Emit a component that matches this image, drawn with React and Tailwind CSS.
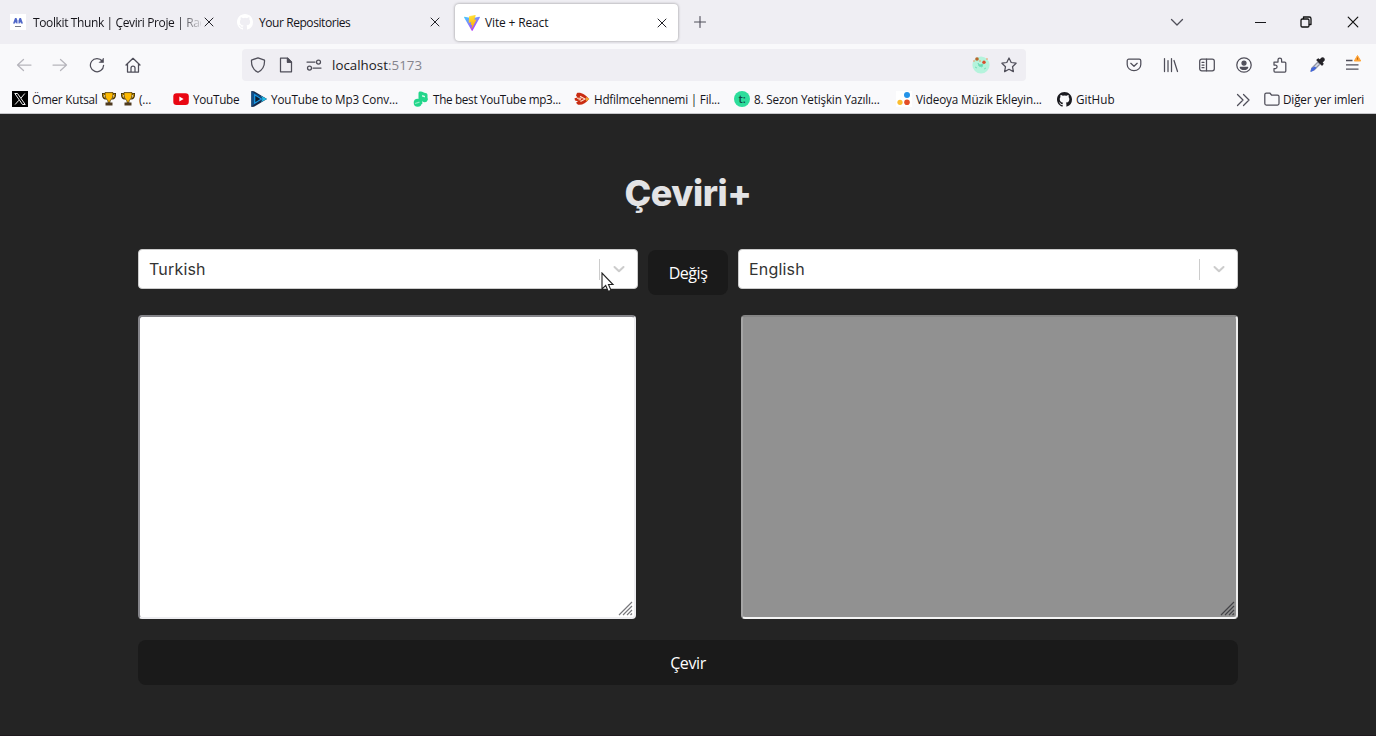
import React from "react";

const UI = "font-['Open_Sans','Noto_Sans',sans-serif]";

function Stroke({ children, size = 16, color = "#4f4e59", w = 1.25, box = 16 }) {
  return (
    <svg className="shrink-0" width={size} height={size} viewBox={`0 0 ${box} ${box}`} fill="none" stroke={color} strokeWidth={w} strokeLinecap="round" strokeLinejoin="round">
      {children}
    </svg>
  );
}

function Close({ color = "#222228", size = 10 }) {
  return (
    <Stroke size={size} box={10} color={color} w={1}>
      <path d="M1 1l8 8M9 1L1 9" />
    </Stroke>
  );
}

function GithubMark({ fill, size = 16 }) {
  return (
    <svg className="shrink-0" width={size} height={size} viewBox="0 0 16 16" fill={fill}>
      <path d="M8 0C3.58 0 0 3.58 0 8c0 3.54 2.29 6.53 5.47 7.59.4.07.55-.17.55-.38v-1.49c-2.01.37-2.53-.49-2.69-.94-.09-.23-.48-.94-.82-1.13-.28-.15-.68-.52-.01-.53.63-.01 1.08.58 1.23.82.72 1.21 1.87.87 2.33.66.07-.52.28-.87.51-1.07-1.78-.2-3.64-.89-3.64-3.95 0-.87.31-1.59.82-2.15-.08-.2-.36-1.02.08-2.12 0 0 .67-.21 2.2.82a7.6 7.6 0 0 1 4 0c1.53-1.04 2.2-.82 2.2-.82.44 1.1.16 1.92.08 2.12.51.56.82 1.27.82 2.15 0 3.07-1.87 3.75-3.65 3.95.29.25.54.73.54 1.48v2.2c0 .21.15.46.55.38A8.01 8.01 0 0 0 16 8c0-4.42-3.58-8-8-8z" />
    </svg>
  );
}

function ViteLogo() {
  return (
    <svg className="shrink-0" width="16" height="16" viewBox="0 0 32 32">
      <defs>
        <linearGradient id="va" x1="0" y1="0" x2=".6" y2="1">
          <stop offset="0" stopColor="#41d1ff" />
          <stop offset="1" stopColor="#bd34fe" />
        </linearGradient>
        <linearGradient id="vb" x1=".4" y1="0" x2=".6" y2="1">
          <stop offset="0" stopColor="#ffea83" />
          <stop offset=".1" stopColor="#ffdd35" />
          <stop offset="1" stopColor="#ffa800" />
        </linearGradient>
      </defs>
      <path d="M31.8 5L17 31.4c-.3.6-1.100.6-1.400 0L.2 5C-.2 4.300.4 3.500 1.200 3.700L16 6.300l14.600-2.600c.9-.2 1.600.700 1.200 1.300z" fill="url(#va)" />
      <path d="M22.900 0L10.500 2.200c-.2 0-.3.2-.3.4L9.500 15c0 .3.200.5.500.4l4-.7c.3-.1.500.2.500.500l-1 4.500c0 .3.200.6.500.5l1.900-.6c.3-.1.600.2.500.5l-1.400 7c-.1.400.5.700.7.300l.2-.3 8.900-17.700c.1-.3-.1-.6-.5-.6l-3.100.6c-.3.1-.5-.2-.4-.5l2.500-8c.1-.3-.1-.6-.4-.5z" fill="url(#vb)" />
    </svg>
  );
}

function Trophy() {
  return (
    <svg className="shrink-0" width="14" height="14" viewBox="0 0 14 14">
      <path d="M3 2H.8c0 3 1 4.500 3 4.800M11 2h2.200c0 3-1 4.500-3 4.800" fill="none" stroke="#3a2b08" strokeWidth="1.900" />
      <path d="M3 2.200H1.200c0 2.300.8 3.500 2.500 4M11 2.200h1.800c0 2.300-.8 3.500-2.500 4" fill="none" stroke="#f5b400" strokeWidth=".8" />
      <path d="M3 .6h8c.2 4-.8 7-3 8v2H6v-2C3.800 7.600 2.800 4.600 3 .6z" fill="#fdb900" stroke="#4a370c" strokeWidth=".8" />
      <path d="M3.500 10.500h7v3h-7z" fill="#4e3a20" />
    </svg>
  );
}

function XLogo() {
  return (
    <svg className="shrink-0" width="16" height="16" viewBox="0 0 16 16">
      <path d="M0 0h16v16H0z" fill="#000" />
      <path d="M2.800 2.500h2.700l7.700 11h-2.700zM12.800 2.500L9 7M7 9.200l-3.900 4.300" fill="none" stroke="#f2f2f2" strokeWidth="1" />
    </svg>
  );
}

function YoutubeLogo() {
  return (
    <svg className="shrink-0" width="16" height="16" viewBox="0 0 16 16">
      <rect x=".3" y="2.200" width="15.500" height="11.800" rx="3.300" fill="#e90612" />
      <path d="M6.300 5.600v5l4.300-2.500z" fill="#fff" />
    </svg>
  );
}

function PlayLogo() {
  return (
    <svg className="shrink-0" width="16" height="16" viewBox="0 0 16 16">
      <path d="M.3 0L3 .3 16 8 3 15.700.3 16z" fill="#16294a" />
      <path d="M.5.500L15 7.500 4 4v9L.5 15.500z" fill="#12508a" />
      <path d="M3.700 3.800v8.400L10.500 8z" fill="#101d30" stroke="#1a9dea" strokeWidth="1.200" />
      <path d="M10 5L16 8l-6 3 1.500-3z" fill="#20bce8" />
    </svg>
  );
}

function NoteLogo() {
  return (
    <svg className="shrink-0" width="16" height="16" viewBox="0 0 16 16" fill="#22d68b">
      <path d="M5.500 2C5.500.8 6.500.2 7.800.5c2 .4 3 1.300 4.700 1.400 1.200.1 2 .8 2 2V9H9.300v4H5.500z" />
      <circle cx="4.700" cy="11.800" r="4" />
      <circle cx="11.700" cy="8.300" r="2.900" />
      <path d="M9 4.300c1.500 0 2 .7 3 .7v1.300c-1 0-1.700-.3-3-.7z" fill="#d9fbec" />
      <path d="M2 12.500l4.500-1.300" stroke="#91edc4" strokeWidth="1.200" />
    </svg>
  );
}

function FilmLogo() {
  return (
    <svg className="shrink-0" width="16" height="16" viewBox="0 0 16 16">
      <path d="M3 2c4-1 9 2 12 6-3 4-7 6.500-11 5.700L2 11.800l2-1.500-3-.8L.5 7.300l3-.8L2 4.500z" fill="#c92c12" />
      <path d="M6 5.200L11 8l-4.500 2.500M3 7.300h4.500M7 8.800H4.500" fill="none" stroke="#ffe3cc" strokeWidth="1.100" />
      <path d="M12 6L15.500 8 12 10.300" fill="#f0a52c" />
    </svg>
  );
}

function TLogo() {
  return (
    <span className="flex size-4 shrink-0 items-center justify-center rounded-full bg-[#2cdd9b] pb-0.5 text-[11px] leading-none font-semibold text-[#0c4a48]">t:</span>
  );
}

function DotsLogo() {
  return (
    <svg className="shrink-0" width="16" height="16" viewBox="0 0 16 16">
      <path d="M0 0h16v16H0z" fill="#fff" />
      <circle cx="11" cy="4" r="3" fill="#2493e8" />
      <circle cx="4" cy="11.300" r="2.600" fill="#fbbd2e" />
      <circle cx="11" cy="11.300" r="2.800" fill="#e34e27" />
    </svg>
  );
}

const bookmarks = [
  { icon: <YoutubeLogo />, text: "YouTube", w: "w-[78px]", t: "tracking-[-0.25px]" },
  { icon: <PlayLogo />, text: "YouTube to Mp3 Conv...", w: "w-[162px]", t: "tracking-[-0.11px]" },
  { icon: <NoteLogo />, text: "The best YouTube mp3...", w: "w-[161px]", t: "tracking-[-0.3px]" },
  { icon: <FilmLogo />, text: "Hdfilmcehennemi | Fil...", w: "w-[160px]", t: "tracking-[-0.2px]" },
  { icon: <TLogo />, text: "8. Sezon Yetişkin Yazılı...", w: "w-[162px]", t: "tracking-[-0.17px]" },
  { icon: <DotsLogo />, text: "Videoya Müzik Ekleyin...", w: "w-[161px]", t: "tracking-[-0.12px]" },
  { icon: <GithubMark fill="#1b1b20" size={15} />, text: "GitHub", w: "w-[179px]", t: "tracking-[0px]" },
];

function TabBar() {
  return (
    <div className="flex h-11 items-start bg-[#efeef3] text-[12px] text-[#15141a]">
      <div className="flex h-11 w-[227px] items-center pl-2.5">
        <svg className="shrink-0" width="16" height="16" viewBox="0 0 16 16">
          <path d="M0 0h16v16H0z" fill="#fff" />
          <path d="M3 9.500L5 4h1.500l1 2.500V9.500H6.500L5.700 8 5 9.500zM8.500 9.500V6.500L9.500 4H11l2 5.500h-2L10.300 8l-.8 1.500z" fill="#5067c8" />
          <path d="M5 12.500h6" stroke="#777a86" strokeWidth="1" />
        </svg>
        <div className="mt-0.5 ml-[7px] w-[168px] bg-linear-to-r from-[#15141a] from-86% to-[#15141a20] bg-clip-text whitespace-nowrap text-transparent tracking-[-0.38px]">Toolkit Thunk | Çeviri Proje | Rac</div>
        <span className="ml-[2.500px]"><Close /></span>
      </div>
      <div className="flex h-11 w-[228px] items-center pl-2.5">
        <GithubMark fill="#fff" />
        <div className="mt-0.5 ml-1.5 w-[171px] whitespace-nowrap tracking-[-0.43px]">Your Repositories</div>
        <Close />
      </div>
      <div className="mt-1 flex h-[37px] w-[223px] items-center rounded bg-white pl-[9px] shadow-[0_0_3px_rgba(0,0,0,0.4)]">
        <ViteLogo />
        <div className="mt-px ml-[5px] w-[172px] whitespace-nowrap tracking-[-0.15px]">Vite + React</div>
        <Close />
      </div>
      <div className="flex h-11 flex-1 items-center pl-4">
        <Stroke size={12} box={12} w={1.1}><path d="M6 .5v11M.500 6h11" /></Stroke>
        <div className="ml-[464px] flex items-center">
          <Stroke size={14} box={14} w={1.300}><path d="M1.500 4.500L7 10l5.500-5.500" /></Stroke>
        </div>
        <div className="ml-[71px] h-px w-[11px] bg-[#18181c]" />
        <div className="ml-[34px]">
          <Stroke size={12} box={12} w={1.300} color="#111"><rect x="1" y="3" width="8" height="8" rx="1.300" /><path d="M3.500 2.500V1h5.800c1 0 1.700.7 1.700 1.700V8.500H9.500" /></Stroke>
        </div>
        <div className="ml-[35px]"><Close size={12} color="#111" /></div>
      </div>
    </div>
  );
}

function Toolbar() {
  return (
    <div className="flex h-[42px] items-center pl-4">
      <div className="flex w-[226px] items-center gap-5">
        <Stroke color="#b6b5bc"><path d="M15 8H1.500M7.500 2.500L1.500 8l6 5.500" /></Stroke>
        <Stroke color="#b6b5bc"><path d="M1 8h13.500M8.500 2.500l6 5.500-6 5.500" /></Stroke>
        <span className="ml-px flex"><Stroke><path d="M13.300 4.200A6.600 6.600 0 1 0 14.600 8.300" /><path d="M14.500 1.500v4h-4z" fill="#4f4e59" strokeWidth=".6" /></Stroke></span>
        <Stroke><path d="M1 8l7-6.700L15 8M2.500 7v8h11V7M6 15v-4a2 2 0 0 1 4 0v4" /></Stroke>
      </div>
      <div className="flex h-8 w-[784px] items-center rounded bg-[#efeef3] pl-2">
        <Stroke><path d="M8 .8l6.500 2.400C14.800 8.500 13 12.800 8 15.300 3 12.800 1.200 8.500 1.500 3.200z" /></Stroke>
        <span className="ml-3 flex"><Stroke><path d="M2.500 1.200h7l4 4v9.600h-11zM9.500 1.200v4h4" /><path d="M9.500 1.200v4h4z" fill="#4f4e59" /></Stroke></span>
        <span className="ml-3 flex"><Stroke><path d="M1 5h8M7 11h8" /><circle cx="12.500" cy="5" r="2" /><circle cx="3.500" cy="11" r="2" /></Stroke></span>
        <div className="mt-0.5 ml-2.5 w-[640px] text-[13.300px] leading-none text-[#1b1a22] tracking-[0.03px]">localhost<span className="text-[#85848d]">:5173</span></div>
        <svg className="shrink-0" width="18" height="18" viewBox="0 0 18 18">
          <circle cx="9" cy="9" r="8.600" fill="#b5f3dc" />
          <path d="M6 7l2 2 3-1-1 3-3-1zM3 11l2 1M12 13l2-1" fill="#65d9b1" stroke="#75dfbb" />
          <circle cx="5" cy="3" r="1.800" fill="#b9662d" /><circle cx="12" cy="6.300" r="1.700" fill="#d84b2b" />
          <path d="M1 5h2M7 5h2M14 3h2" stroke="#f29a64" />
        </svg>
        <span className="ml-[11px] flex"><Stroke><path d="M8 1l2.200 4.500 4.900.7-3.600 3.500.9 4.900L8 12.300l-4.400 2.300.9-4.900L.9 6.200l4.900-.7z" /></Stroke></span>
      </div>
      <div className="ml-[100px] flex gap-[20.500px]">
        <Stroke><path d="M2.800 2.200h10.400c.9 0 1.600.7 1.600 1.600v3.700a6.800 6.200 0 0 1-13.600 0V3.800c0-.9.7-1.600 1.600-1.600zM4.800 6.300L8 9.300l3.200-3" /></Stroke>
        <Stroke><path d="M1.500 1.500v13M5 3.500v11M8.500 1.500v13M11 3.500l3.500 11" /></Stroke>
        <Stroke><rect x=".7" y="2.200" width="14.600" height="11.600" rx="2" /><path d="M7.500 2.200v11.600M3 5.300h2M3 8h2M3 10.700h2" /></Stroke>
        <Stroke><circle cx="8" cy="8" r="7.200" /><circle cx="8" cy="6" r="2" fill="#4f4e59" /><path d="M4.300 10.300h7.400c-1 2.900-6.400 2.900-7.400 0z" fill="#4f4e59" /></Stroke>
        <Stroke><path d="M2 5h4V2.800a1.800 1.800 0 0 1 3.600 0V5h3.200c.6 0 1 .4 1 1v8c0 .6-.4 1-1 1H3c-.6 0-1-.4-1-1v-2.500h1.700a1.800 1.800 0 0 0 0-3.500H2z" /></Stroke>
        <Stroke><path d="M2 14l1-3 6-6 2 2-6 6-3 1z" fill="#d7dce6" stroke="#8f93a3" /><path d="M1.500 15l1-4 3.500-1.500 1.500 1.500L4 14z" fill="#4065dc" stroke="none" /><path d="M8 3l5 5 1-1.200-1.300-1.300L15 3.200C15.500 1.500 14.500.7 13 1l-2.300 2.300L9.300 2z" fill="#252328" stroke="#252328" /></Stroke>
        <svg className="overflow-visible" width="16" height="16" viewBox="0 0 16 16"><path d="M1 3.500h6.500M1 7.800h12.500M1 12.200h12.500" stroke="#4f4e59" strokeWidth="1.300" /><path d="M12.500-1.500L15.700 4H9.300z" fill="#ffa436" stroke="#ffa436" strokeLinejoin="round" /><path d="M12.500.500v2.200" stroke="#c36310" /></svg>
      </div>
    </div>
  );
}

function Bookmarks() {
  return (
    <div className="flex h-[27px] items-center pl-3 text-[11.700px] text-[#15141a]">
      <div className="flex w-[161px] items-center whitespace-nowrap">
        <XLogo />
        <span className="ml-1 w-[69px] tracking-[-0.2px]">Ömer Kutsal</span>
        <span className="ml-px flex gap-[5px]"><Trophy /><Trophy /></span>
        <span className="ml-1 tracking-[-0.1px]">(...</span>
      </div>
      {bookmarks.map((b) => (
        <div key={b.text} className={`flex shrink-0 items-center gap-1 whitespace-nowrap ${b.w} ${b.t}`}>
          {b.icon}
          <span>{b.text}</span>
        </div>
      ))}
      <Stroke size={14} box={14}><path d="M1.500 1.500L7 7l-5.500 5.500M7.500 1.500L13 7l-5.500 5.500" /></Stroke>
      <span className="mb-0.5 ml-3.5 flex"><Stroke><path d="M.8 12.500v-9c0-.9.6-1.500 1.500-1.500h3.500l1.700 2h6c.9 0 1.500.6 1.500 1.500v7c0 .9-.6 1.500-1.500 1.500H2.300c-.9 0-1.500-.6-1.500-1.500z" /></Stroke></span>
      <span className="ml-[3px] whitespace-nowrap tracking-[-0.14px]">Diğer yer imleri</span>
    </div>
  );
}

function Select({ value, children }) {
  return (
    <div className="relative flex h-10 w-[500px] items-center rounded border border-[#ccc] bg-white pl-2.5 font-['Inter',sans-serif] text-[16px] text-[#333]">
      <span className="flex-1 tracking-[0.18px]">{value}</span>
      <span className="h-[21px] w-px bg-[#ccc]" />
      <span className="flex w-[37px] justify-center">
        <Stroke size={20} box={20} color="#ccc" w={2}><path d="M5.500 8l4.500 4.300L14.500 8" /></Stroke>
      </span>
      {children}
    </div>
  );
}

function Grip({ color }) {
  return (
    <svg className="absolute right-px bottom-px" width="15" height="15" viewBox="0 0 15 15" stroke={color} strokeWidth="1.200">
      <path d="M1 14L14 1M5 14l9-9M9 14l5-5M12.500 14l1.500-1.500" />
    </svg>
  );
}

export default function App() {
  return (
    <div className={`flex h-[736px] w-[1376px] flex-col overflow-hidden bg-[#242424] ${UI}`}>
      <header className="h-[114px] shrink-0 border-b border-[#c6c6ca] bg-[#f9f9fb]">
        <TabBar />
        <Toolbar />
        <Bookmarks />
      </header>
      <main className="mx-auto flex w-[1100px] flex-1 flex-col">
        <h1 className="mt-[55px] text-center font-['Inter',sans-serif] text-[36px] leading-[48px] font-extrabold tracking-[-0.45px] text-[#e3e3e5]">Çeviri+</h1>
        <div className="mt-[32px] flex h-[46px] items-start justify-between">
          <Select value="Turkish">
            <svg className="absolute top-[22px] left-[462px]" width="14" height="21" viewBox="0 0 14 21">
              <path d="M1 1v16l3.700-3.500L7.300 19.500l2.700-1.200-2.500-5.800H12z" fill="#fff" stroke="#222" strokeWidth="1.100" />
            </svg>
          </Select>
          <button className="mt-px h-[45px] w-20 rounded-lg bg-[#1a1a1a] text-[16px] tracking-[-0.45px] text-white">Değiş</button>
          <Select value="English" />
        </div>
        <div className="mt-5 flex h-[304px] justify-between">
          <div className="relative w-[498px] rounded border-2 border-t-[#85858a] border-r-[#ededf0] border-b-[#ededf0] border-l-[#85858a] bg-white"><Grip color="#77777b" /></div>
          <div className="relative w-[497px] rounded border-2 border-t-[#858585] border-r-[#ededed] border-b-[#f5f5f5] border-l-[#a5a5a5] bg-[#919191]"><Grip color="#434347" /></div>
        </div>
        <button className="mt-[21px] h-[45px] rounded-lg bg-[#1a1a1a] text-[16px] tracking-[-0.4px] text-white">Çevir</button>
      </main>
      <div className="h-px bg-[#1e191d]" />
    </div>
  );
}
